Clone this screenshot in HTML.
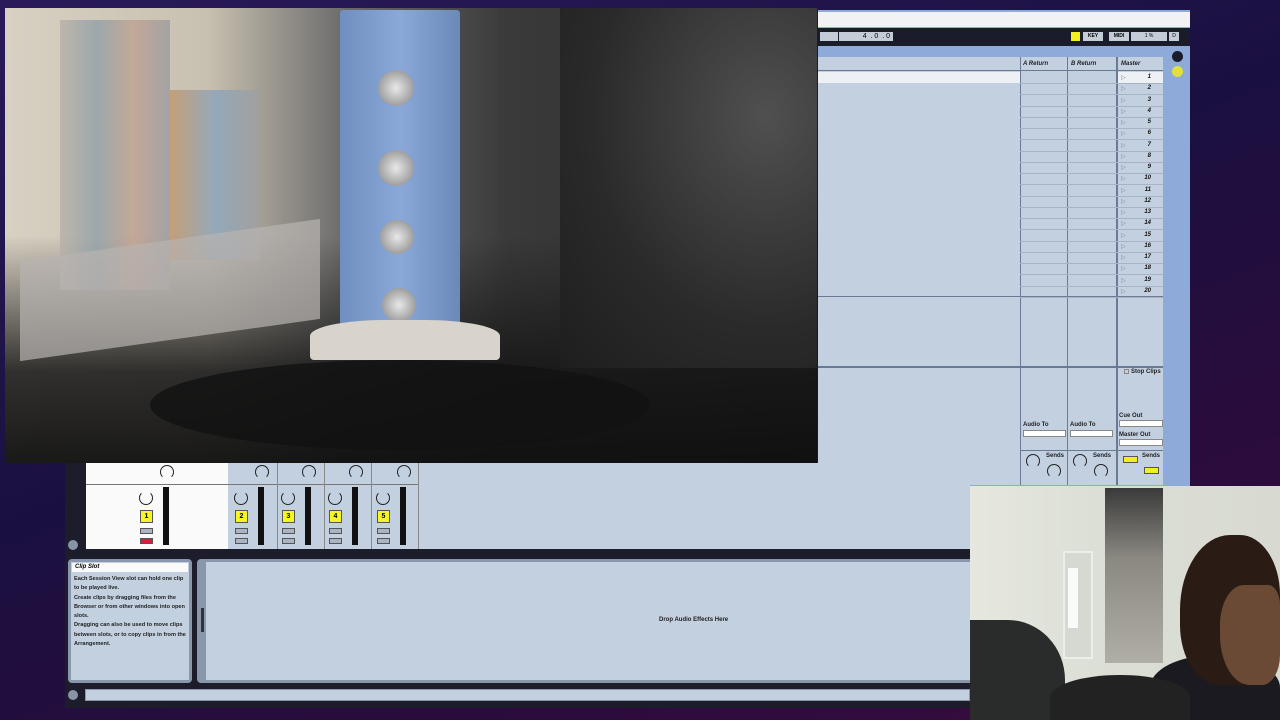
<!DOCTYPE html>
<html><head><style>
*{margin:0;padding:0;box-sizing:border-box}
body{width:1280px;height:720px;overflow:hidden;position:relative;font-family:"Liberation Sans",sans-serif;background:linear-gradient(160deg,#2a1a5a 0%,#1a1040 45%,#2a0c3c 75%,#3a0c40 100%)}
.a{position:absolute}
.t{font-size:6px;font-weight:bold;font-style:italic;color:#222}
.n{font-size:6px;font-weight:bold;font-style:italic;color:#111;text-align:right}
.knob{position:absolute;width:14px;height:14px;border:1.5px solid #222;border-radius:50%;border-bottom-color:transparent}
.ybtn{position:absolute;width:13px;height:13px;background:#f5f520;border:1px solid #555;font-size:7px;font-weight:bold;text-align:center;line-height:11px}
.sbtn{position:absolute;width:13px;height:6px;background:#aab4c4;border:1px solid #555}
.meter{position:absolute;width:6px;height:58px;background:#111;border-left:2px solid #111;border-right:2px solid #111;background:linear-gradient(90deg,#111 0 40%,#ddd 40% 60%,#111 60%)}
</style></head><body>
<!-- Photo -->
<div class="a" style="left:5px;top:8px;width:812px;height:455px;background:linear-gradient(90deg,#d8d0c2 0%,#c8c0b0 25%,#6a6a6a 42%,#3a3a3a 62%,#2a2a2a 100%)"></div>
<div class="a" style="left:5px;top:8px;width:812px;height:455px;background:linear-gradient(180deg,rgba(0,0,0,0) 0%,rgba(0,0,0,0) 50%,rgba(20,20,20,.85) 80%,rgba(15,15,15,.95) 100%)"></div>
<div class="a" style="left:60px;top:20px;width:110px;height:270px;background:linear-gradient(90deg,#b8b0a8,#8fa0a8,#c0a090,#9a9aa0);opacity:.8"></div>
<div class="a" style="left:170px;top:90px;width:90px;height:170px;background:linear-gradient(90deg,#c09060,#80a0c0,#a0a0a0);opacity:.7"></div>
<div class="a" style="left:20px;top:240px;width:300px;height:100px;background:#b8b4b0;opacity:.7;transform:skewY(-8deg)"></div>
<div class="a" style="left:340px;top:10px;width:120px;height:350px;background:linear-gradient(90deg,#6f8fc0,#8aa8d8,#6a88b8);border-radius:3px"></div>
<div class="a" style="left:378px;top:70px;width:36px;height:36px;border-radius:50%;background:radial-gradient(#e8e8e8,#808080)"></div>
<div class="a" style="left:378px;top:150px;width:36px;height:36px;border-radius:50%;background:radial-gradient(#e8e8e8,#808080)"></div>
<div class="a" style="left:380px;top:220px;width:34px;height:34px;border-radius:50%;background:radial-gradient(#e8e8e8,#808080)"></div>
<div class="a" style="left:382px;top:288px;width:34px;height:34px;border-radius:50%;background:radial-gradient(#e8e8e8,#808080)"></div>
<div class="a" style="left:310px;top:320px;width:190px;height:40px;background:#d8d4cc;border-radius:40% 40% 4px 4px"></div>
<div class="a" style="left:560px;top:8px;width:257px;height:360px;background:radial-gradient(ellipse at 80% 30%,#505050,#2a2a2a 60%,#1e1e1e)"></div>
<div class="a" style="left:150px;top:360px;width:500px;height:90px;background:#111;border-radius:50%;opacity:.8"></div>
<!-- Ableton top window -->
<div class="a" style="left:818px;top:10px;width:372px;height:476px;background:#8eaad8"></div>
<div class="a" style="left:818px;top:12px;width:372px;height:15px;background:#f2f2f4"></div>
<div class="a" style="left:818px;top:28px;width:372px;height:18px;background:#1a1c2c"></div>
<div class="a" style="left:820px;top:32px;width:18px;height:9px;background:#c4ccd8"></div>
<div class="a" style="left:839px;top:32px;width:54px;height:9px;background:#c4ccd8;font-size:7px;text-align:right;padding-right:3px;line-height:9px">4 &nbsp;. 0 &nbsp;. 0</div>
<div class="a" style="left:1071px;top:32px;width:9px;height:9px;background:#f0f020"></div>
<div class="a" style="left:1083px;top:32px;width:20px;height:9px;background:#c4ccd8;font-size:5px;font-weight:bold;text-align:center;line-height:9px">KEY</div>
<div class="a" style="left:1109px;top:32px;width:20px;height:9px;background:#c4ccd8;font-size:5px;font-weight:bold;text-align:center;line-height:9px">MIDI</div>
<div class="a" style="left:1131px;top:32px;width:36px;height:9px;background:#c4ccd8;font-size:5px;text-align:center;line-height:9px">1 %</div>
<div class="a" style="left:1169px;top:32px;width:10px;height:9px;background:#c4ccd8;font-size:5px;text-align:center;line-height:9px">D</div>
<div class="a" style="left:1172px;top:51px;width:11px;height:11px;border-radius:50%;background:#1a1c2c"></div>
<div class="a" style="left:1172px;top:66px;width:11px;height:11px;border-radius:50%;background:#e0e040"></div>
<div class="a" style="left:818px;top:57px;width:345px;height:428px;background:#c3d0e0"></div>
<div class="a" style="left:818px;top:72px;width:202px;height:11px;background:#edf0f4"></div>
<div class="a" style="left:818px;top:296px;width:345px;height:1px;background:#6a7a94"></div>
<div class="a" style="left:818px;top:366px;width:345px;height:2px;background:#6a7a94"></div>
<div class="a" style="left:1020px;top:57px;width:1px;height:428px;background:#6a7a94"></div>
<div class="a" style="left:1067px;top:57px;width:1px;height:428px;background:#6a7a94"></div>
<div class="a" style="left:1116px;top:57px;width:2px;height:428px;background:#6a7a94"></div>
<div class="a t" style="left:1023px;top:61px">A Return</div>
<div class="a t" style="left:1071px;top:61px">B Return</div>
<div class="a t" style="left:1121px;top:61px">Master</div>
<div class="a" style="left:818px;top:70px;width:345px;height:1px;background:#6a7a94"></div>
<div class="a" style="left:1118px;top:72px;width:45px;height:11px;background:#edf0f4"></div>
<div id="rows"></div>
<div class="a" style="left:1124px;top:369px;width:5px;height:5px;border:1px solid #888"></div>
<div class="a t" style="left:1131px;top:369px;font-style:normal">Stop Clips</div>
<div class="a t" style="left:1119px;top:413px;font-style:normal">Cue Out</div>
<div class="a" style="left:1119px;top:420px;width:44px;height:7px;background:#fff;border:1px solid #888"></div>
<div class="a t" style="left:1119px;top:432px;font-style:normal">Master Out</div>
<div class="a" style="left:1119px;top:439px;width:44px;height:7px;background:#fff;border:1px solid #888"></div>
<div class="a t" style="left:1023px;top:422px;font-style:normal">Audio To</div>
<div class="a" style="left:1023px;top:430px;width:43px;height:7px;background:#fff;border:1px solid #888"></div>
<div class="a t" style="left:1070px;top:422px;font-style:normal">Audio To</div>
<div class="a" style="left:1070px;top:430px;width:43px;height:7px;background:#fff;border:1px solid #888"></div>
<div class="a" style="left:1020px;top:450px;width:143px;height:1px;background:#6a7a94"></div>
<div class="knob" style="left:1026px;top:454px"></div><div class="knob" style="left:1047px;top:464px"></div>
<div class="knob" style="left:1073px;top:454px"></div><div class="knob" style="left:1094px;top:464px"></div>
<div class="a t" style="left:1046px;top:453px;font-style:normal">Sends</div>
<div class="a t" style="left:1093px;top:453px;font-style:normal">Sends</div>
<div class="a t" style="left:1142px;top:453px;font-style:normal">Sends</div>
<div class="a" style="left:1123px;top:456px;width:15px;height:7px;background:#f0f020;border:1px solid #555"></div>
<div class="a" style="left:1144px;top:467px;width:15px;height:7px;background:#f0f020;border:1px solid #555"></div>
<!-- lower Ableton -->
<div class="a" style="left:65px;top:463px;width:905px;height:245px;background:#1c1c2a"></div>
<div class="a" style="left:86px;top:463px;width:884px;height:86px;background:#c3d0e0"></div>
<div class="a" style="left:86px;top:463px;width:142px;height:86px;background:#fafafa"></div>
<div class="a" style="left:86px;top:484px;width:332px;height:1px;background:#777"></div>
<div class="a" style="left:418px;top:463px;width:1px;height:86px;background:#888"></div>
<div class="a" style="left:277px;top:463px;width:1px;height:86px;background:#888"></div>
<div class="a" style="left:324px;top:463px;width:1px;height:86px;background:#888"></div>
<div class="a" style="left:371px;top:463px;width:1px;height:86px;background:#888"></div>
<div class="knob" style="left:160px;top:465px"></div><div class="knob" style="left:255px;top:465px"></div><div class="knob" style="left:302px;top:465px"></div><div class="knob" style="left:349px;top:465px"></div><div class="knob" style="left:397px;top:465px"></div>
<div class="knob" style="left:139px;top:491px;border-top-color:transparent;border-bottom-color:#222"></div>
<div class="knob" style="left:234px;top:491px;border-top-color:transparent;border-bottom-color:#222"></div>
<div class="knob" style="left:281px;top:491px;border-top-color:transparent;border-bottom-color:#222"></div>
<div class="knob" style="left:328px;top:491px;border-top-color:transparent;border-bottom-color:#222"></div>
<div class="knob" style="left:376px;top:491px;border-top-color:transparent;border-bottom-color:#222"></div>
<div class="meter" style="left:163px;top:487px"></div><div class="meter" style="left:258px;top:487px"></div><div class="meter" style="left:305px;top:487px"></div><div class="meter" style="left:352px;top:487px"></div><div class="meter" style="left:400px;top:487px"></div>
<div class="ybtn" style="left:140px;top:510px">1</div><div class="ybtn" style="left:235px;top:510px">2</div><div class="ybtn" style="left:282px;top:510px">3</div><div class="ybtn" style="left:329px;top:510px">4</div><div class="ybtn" style="left:377px;top:510px">5</div>
<div class="sbtn" style="left:140px;top:528px"></div><div class="sbtn" style="left:235px;top:528px"></div><div class="sbtn" style="left:282px;top:528px"></div><div class="sbtn" style="left:329px;top:528px"></div><div class="sbtn" style="left:377px;top:528px"></div>
<div class="sbtn" style="left:140px;top:538px;background:#d0203a"></div><div class="sbtn" style="left:235px;top:538px"></div><div class="sbtn" style="left:282px;top:538px"></div><div class="sbtn" style="left:329px;top:538px"></div><div class="sbtn" style="left:377px;top:538px"></div>
<div class="a" style="left:68px;top:540px;width:10px;height:10px;border-radius:50%;background:#8a94a8"></div>
<div class="a" style="left:68px;top:559px;width:124px;height:124px;background:#8a96ac;border-radius:4px"></div>
<div class="a" style="left:71px;top:562px;width:118px;height:118px;background:#c3d0e0"></div>
<div class="a" style="left:72px;top:563px;width:116px;height:9px;background:#fafafa;font-size:6px;font-weight:bold;font-style:italic;padding-left:3px;line-height:9px">Clip Slot</div>
<div class="a" style="left:74px;top:575px;width:114px;font-size:5.6px;font-weight:bold;color:#222;line-height:9.3px">Each Session View slot can hold one clip to be played live.<br>Create clips by dragging files from the Browser or from other windows into open slots.<br>Dragging can also be used to move clips between slots, or to copy clips in from the Arrangement.</div>
<div class="a" style="left:197px;top:559px;width:773px;height:124px;background:#8a96ac;border-radius:4px 0 0 4px"></div>
<div class="a" style="left:206px;top:562px;width:764px;height:118px;background:#c3d0e0"></div>
<div class="a" style="left:201px;top:608px;width:3px;height:24px;background:#333"></div>
<div class="a" style="left:659px;top:617px;font-size:6px;font-weight:bold;color:#222">Drop Audio Effects Here</div>
<div class="a" style="left:68px;top:690px;width:10px;height:10px;border-radius:50%;background:#8a94a8"></div>
<div class="a" style="left:85px;top:689px;width:885px;height:12px;background:#c3d0e0;border:1px solid #8a96ac"></div>
<!-- webcam -->
<div class="a" style="left:970px;top:486px;width:310px;height:234px;background:linear-gradient(90deg,#e6e8e0,#dcdfd6 40%,#d8dad2)"></div>
<div class="a" style="left:1105px;top:488px;width:58px;height:175px;background:linear-gradient(180deg,#3a3a3a,#8a8880 40%,#b0aea6)"></div>
<div class="a" style="left:1063px;top:551px;width:30px;height:108px;background:#d6d8d2;border:2px solid #eceee8"></div>
<div class="a" style="left:1068px;top:568px;width:10px;height:60px;background:#fafafa"></div>
<div class="a" style="left:970px;top:620px;width:95px;height:100px;background:#2a2c2c;border-radius:0 60% 0 0"></div>
<div class="a" style="left:1150px;top:655px;width:130px;height:65px;background:#1a1a20;border-radius:50% 50% 0 0"></div>
<div class="a" style="left:1050px;top:675px;width:140px;height:45px;background:#222;border-radius:50% 50% 0 0"></div>
<div class="a" style="left:1180px;top:535px;width:100px;height:150px;background:#2a1c14;border-radius:50% 40% 30% 40%"></div>
<div class="a" style="left:1220px;top:585px;width:60px;height:100px;background:#6a4a34;border-radius:40% 20% 30% 50%"></div>
<script>
var h='';for(var i=1;i<=20;i++){var y=72+(i-1)*11.25;h+='<div class="a" style="left:1020px;top:'+(y+11)+'px;width:143px;height:1px;background:#a8b4c6"></div><div class="a" style="left:1121px;top:'+(y+2)+'px;font-size:6px;color:#7a88a0">&#9655;</div><div class="a n" style="left:1135px;top:'+(y+2)+'px;width:16px">'+i+'</div>';}
document.getElementById('rows').innerHTML=h;
</script>
</body></html>
